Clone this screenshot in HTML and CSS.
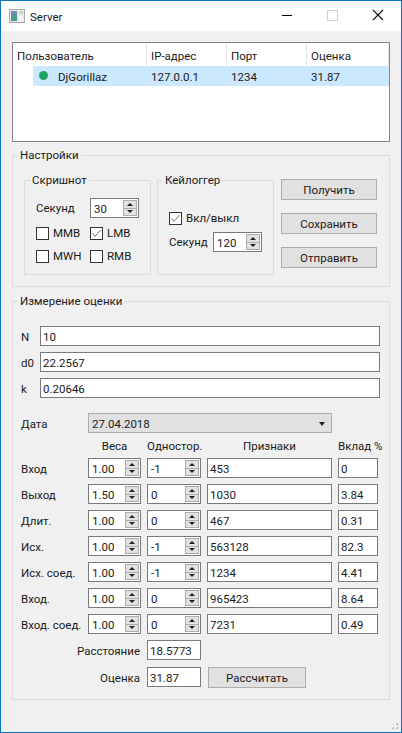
FILE: index.html
```html
<!DOCTYPE html>
<html lang="ru">
<head>
    <meta charset="UTF-8">
    <meta name="viewport" content="width=device-width, initial-scale=1.0">
    <title>Server</title>
    <link rel="stylesheet" href="styles.css">
</head>
<body>
    <div class="window">
        <div class="titlebar">
            <svg class="app-icon" width="16" height="14" viewBox="0 0 16 14">
                <rect x="0.5" y="0.5" width="15" height="13" fill="#e8e8e8" stroke="#a8a8a8"/>
                <rect x="2" y="2" width="6" height="10" fill="#4d9a8e"/>
                <rect x="2" y="2" width="6" height="4" fill="#6f8cb0"/>
                <rect x="10" y="2" width="4" height="3" fill="#c4d8c4"/>
                <rect x="10" y="7" width="4" height="5" fill="#f4f4f4"/>
            </svg>
            <span class="title-text">Server</span>
            <div class="controls">
                <svg width="46" height="30" viewBox="0 0 46 30"><rect x="21" y="14" width="10" height="1" fill="#000"/></svg>
                <svg width="46" height="30" viewBox="0 0 46 30"><rect x="20.5" y="9.5" width="10" height="10" fill="none" stroke="#cfcfcf"/></svg>
                <svg width="46" height="30" viewBox="0 0 46 30"><path d="M20 9l10 10M30 9l-10 10" stroke="#111" stroke-width="1.1" fill="none"/></svg>
            </div>
        </div>

        <div class="content">
            <div class="tree">
                <div class="tree-head">
                    <div class="th">Пользователь</div>
                    <div class="th">IP-адрес</div>
                    <div class="th">Порт</div>
                    <div class="th">Оценка</div>
                </div>
                <div class="tree-row">
                    <div class="td td-first"><span class="dot"></span>DjGorillaz</div>
                    <div class="td">127.0.0.1</div>
                    <div class="td">1234</div>
                    <div class="td">31.87</div>
                </div>
            </div>

            <fieldset class="group settings">
                <legend>Настройки</legend>
                <div class="settings-body">
                    <fieldset class="group shot">
                        <legend>Скришнот</legend>
                        <div class="shot-seconds">
                            <span>Секунд</span>
                            <div class="spin"><span>30</span><i class="spin-btn"></i></div>
                        </div>
                        <div class="check-grid">
                            <label class="check"><span class="box"></span>MMB</label>
                            <label class="check"><span class="box"><svg width="11" height="11" viewBox="0 0 11 11"><path d="M1.5 5L4 8.5 9.5 2" fill="none" stroke="#777"/></svg></span>LMB</label>
                            <label class="check"><span class="box"></span>MWH</label>
                            <label class="check"><span class="box"></span>RMB</label>
                        </div>
                    </fieldset>
                    <fieldset class="group keylog">
                        <legend>Кейлоггер</legend>
                        <label class="check keylog-check"><span class="box"><svg width="11" height="11" viewBox="0 0 11 11"><path d="M1.5 5L4 8.5 9.5 2" fill="none" stroke="#777"/></svg></span>Вкл/выкл</label>
                        <div class="keylog-seconds">
                            <span>Секунд</span>
                            <div class="spin"><span>120</span><i class="spin-btn"></i></div>
                        </div>
                    </fieldset>
                    <div class="buttons">
                        <div class="btn">Получить</div>
                        <div class="btn">Сохранить</div>
                        <div class="btn">Отправить</div>
                    </div>
                </div>
            </fieldset>

            <fieldset class="group measure">
                <legend>Измерение оценки</legend>
                <div class="params">
                    <span>N</span><div class="field">10</div>
                    <span>d0</span><div class="field">22.2567</div>
                    <span>k</span><div class="field">0.20646</div>
                </div>
                <div class="date-row">
                    <span>Дата</span>
                    <div class="combo">27.04.2018<i class="combo-arrow"></i></div>
                </div>
                <div class="table">
                    <span></span><span class="col-head">Веса</span><span class="col-head">Одностор.</span><span class="col-head">Признаки</span><span class="col-head">Вклад %</span>

                    <span>Вход</span>
                    <div class="spin"><span>1.00</span><i class="spin-btn"></i></div>
                    <div class="spin"><span>-1</span><i class="spin-btn"></i></div>
                    <div class="field">453</div><div class="field">0</div>

                    <span>Выход</span>
                    <div class="spin"><span>1.50</span><i class="spin-btn"></i></div>
                    <div class="spin"><span>0</span><i class="spin-btn"></i></div>
                    <div class="field">1030</div><div class="field">3.84</div>

                    <span>Длит.</span>
                    <div class="spin"><span>1.00</span><i class="spin-btn"></i></div>
                    <div class="spin"><span>0</span><i class="spin-btn"></i></div>
                    <div class="field">467</div><div class="field">0.31</div>

                    <span>Исх.</span>
                    <div class="spin"><span>1.00</span><i class="spin-btn"></i></div>
                    <div class="spin"><span>-1</span><i class="spin-btn"></i></div>
                    <div class="field">563128</div><div class="field">82.3</div>

                    <span>Исх. соед.</span>
                    <div class="spin"><span>1.00</span><i class="spin-btn"></i></div>
                    <div class="spin"><span>-1</span><i class="spin-btn"></i></div>
                    <div class="field">1234</div><div class="field">4.41</div>

                    <span>Вход.</span>
                    <div class="spin"><span>1.00</span><i class="spin-btn"></i></div>
                    <div class="spin"><span>0</span><i class="spin-btn"></i></div>
                    <div class="field">965423</div><div class="field">8.64</div>

                    <span>Вход. соед.</span>
                    <div class="spin"><span>1.00</span><i class="spin-btn"></i></div>
                    <div class="spin"><span>0</span><i class="spin-btn"></i></div>
                    <div class="field">7231</div><div class="field">0.49</div>

                    <span class="result-label">Расстояние</span>
                    <div class="field result-field">18.5773</div>

                    <span class="result-label">Оценка</span>
                    <div class="field result-field">31.87</div>
                    <div class="btn btn-calc">Рассчитать</div>
                </div>
            </fieldset>
        </div>

        <div class="grip"></div>
    </div>
</body>
</html>
```

FILE: styles.css
```css
* {
    margin: 0;
    padding: 0;
    box-sizing: border-box;
}

body {
    font-family: 'Roboto', 'Noto Sans', sans-serif;
    font-size: 11.5px;
    line-height: 16px;
    color: #1a1a1a;
    background: #f0f0f0;
    overflow: hidden;
}

.window {
    position: relative;
    width: 402px;
    height: 733px;
    border: 1px solid #0a74c4;
    background: #f0f0f0;
}

.titlebar {
    display: flex;
    align-items: center;
    height: 30px;
    padding-left: 8px;
    background: #fff;
}

.app-icon {
    margin: -1px 5px 0 0;
}

.title-text {
    flex: 1;
    padding-top: 2px;
}

.controls {
    display: flex;
    height: 30px;
    margin-right: 2px;
}

.content {
    padding: 11px 11px 0;
}

/* tree */
.tree {
    height: 100px;
    border: 1px solid #85858f;
    background: #fff;
}

.tree-head,
.tree-row {
    display: grid;
    grid-template-columns: 134px 80px 80px 1fr;
}

.tree-head {
    height: 23px;
}

.th {
    padding: 5px 0 0 4px;
    border-right: 1px solid #e5e5e5;
}

.tree-row {
    height: 20px;
    margin-left: 20px;
    grid-template-columns: 114px 80px 80px 1fr;
    background: #cce8ff;
}

.td {
    padding: 3px 0 0 4px;
}

.td-first {
    display: flex;
    align-items: center;
    padding: 1px 0 0 6px;
}

.dot {
    width: 9px;
    height: 9px;
    margin: 0 10px 2px 0;
    border-radius: 50%;
    background: #1fa463;
}

/* group boxes */
.group {
    border: 1px solid #dcdcdc;
    min-width: 0;
}

.group > legend {
    margin-left: 5px;
    padding: 0 2px;
}

.settings {
    margin-top: 5px;
    height: 140px;
    padding: 9px 12px 0 11px;
}

.settings > legend {
    margin-left: -6px;
}

.settings-body {
    display: flex;
}

.shot {
    width: 127px;
    height: 103px;
}

.shot-seconds {
    display: grid;
    grid-template-columns: 54px 49px;
    padding: 10px 0 0 11px;
    align-items: center;
}

.check-grid {
    display: grid;
    grid-template-columns: 54px 1fr;
    row-gap: 7px;
    padding: 7px 0 0 11px;
}

.check {
    display: flex;
    align-items: center;
    height: 16px;
    white-space: nowrap;
}

.box {
    display: block;
    width: 13px;
    height: 13px;
    margin-right: 4px;
    border: 1px solid #333;
    background: #fff;
}

.box svg {
    display: block;
}

.keylog {
    width: 117px;
    height: 103px;
    margin-left: 6px;
}

.keylog-check {
    margin: 22px 0 0 11px;
}

.keylog-seconds {
    display: grid;
    grid-template-columns: 44px 49px;
    align-items: center;
    padding: 6px 0 0 11px;
}

.buttons {
    display: flex;
    flex-direction: column;
    gap: 13px;
    width: 96px;
    margin: 7px 0 0 7px;
}

.btn {
    height: 21px;
    border: 1px solid #adadad;
    background: #e1e1e1;
    text-align: center;
    line-height: 20px;
}

/* spin boxes */
.spin {
    position: relative;
    height: 20px;
    padding: 2px 0 0 3px;
    border: 1px solid #7a7a7a;
    background: #fff;
    line-height: 17px;
}

.spin-btn {
    position: absolute;
    top: 1px;
    right: 1px;
    width: 14px;
    height: 16px;
    border: 1px solid #adadad;
    background:
        linear-gradient(#adadad, #adadad) center / 100% 1px no-repeat,
        #e1e1e1;
}

.spin-btn::before,
.spin-btn::after {
    content: "";
    position: absolute;
    left: 2.5px;
    border-left: 3.5px solid transparent;
    border-right: 3.5px solid transparent;
}

.spin-btn::before {
    top: 2px;
    border-bottom: 3px solid #222;
}

.spin-btn::after {
    bottom: 2px;
    border-top: 3px solid #222;
}

/* measure */
.measure {
    margin-top: 6px;
    height: 407px;
    padding: 17px 9px 0 8px;
}

.measure > legend {
    margin-left: -3px;
}

.field {
    height: 20px;
    padding: 2px 0 0 2px;
    border: 1px solid #7a7a7a;
    background: #fff;
    line-height: 17px;
}

.params {
    display: grid;
    grid-template-columns: 19px 340px;
    row-gap: 6px;
    align-items: center;
}

.date-row {
    display: grid;
    grid-template-columns: 67px 244px;
    align-items: center;
    margin-top: 15px;
}

.combo {
    position: relative;
    height: 20px;
    padding: 2px 0 0 3px;
    border: 1px solid #adadad;
    background: #e1e1e1;
    line-height: 17px;
}

.combo-arrow {
    position: absolute;
    top: 8px;
    right: 6px;
    border-left: 3.5px solid transparent;
    border-right: 3.5px solid transparent;
    border-top: 4px solid #222;
}

.table {
    display: grid;
    grid-template-columns: 61px 53px 54px 125px 40px;
    grid-template-rows: 13px repeat(7, 20px) 21px 21px;
    column-gap: 6px;
    row-gap: 6px;
    align-items: center;
    margin-top: 6px;
    white-space: nowrap;
}

.params > span,
.date-row > span,
.table > span {
    padding-top: 1px;
}

.col-head {
    text-align: center;
}

.result-label {
    grid-column: 1 / 3;
    text-align: right;
    padding-right: 1px;
}

.result-field {
    grid-column: 3;
    align-self: start;
}

.btn-calc {
    grid-column: 4;
    align-self: start;
    width: 98px;
    margin-left: 1px;
}

.grip {
    position: absolute;
    right: 1px;
    bottom: 1px;
    width: 12px;
    height: 12px;
    background: radial-gradient(circle at 1.5px 1.5px, #b5b5b5 1px, transparent 1px) 0 0 / 4px 4px;
    clip-path: polygon(100% 0, 100% 100%, 0 100%);
}
```
